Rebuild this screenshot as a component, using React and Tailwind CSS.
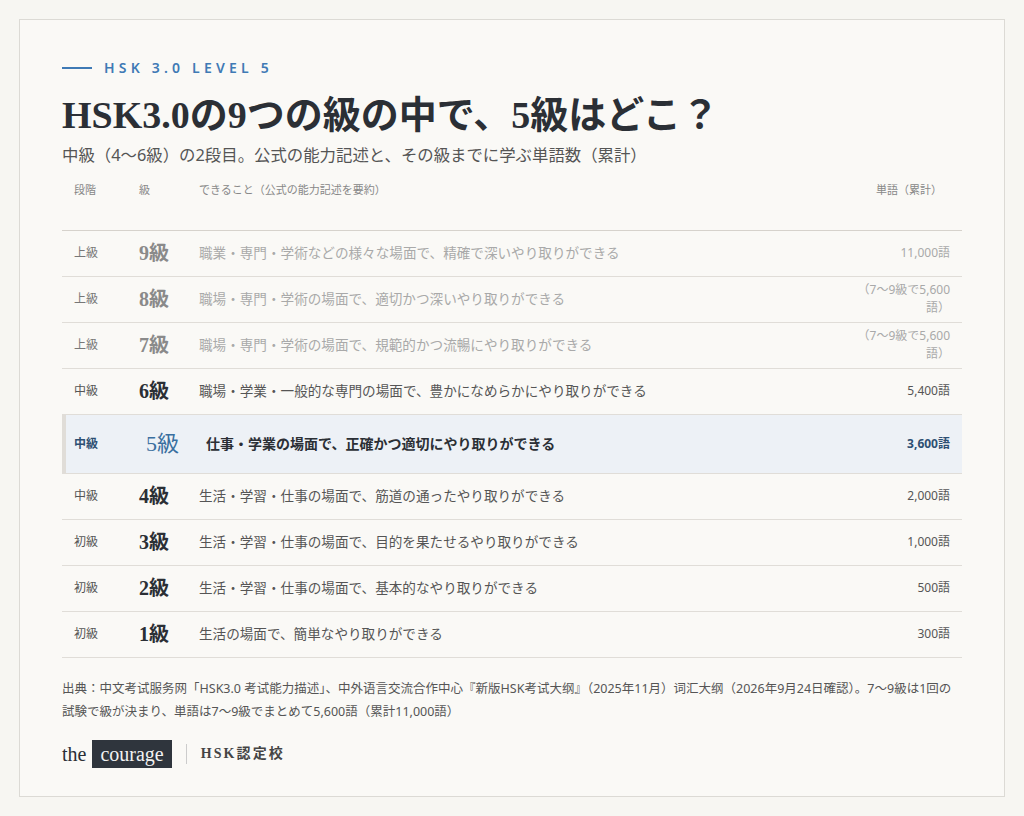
const sans = { fontFamily: '"Noto Sans", "Noto Sans CJK JP", sans-serif' };
const serif = { fontFamily: '"Liberation Serif", "Noto Sans CJK JP", serif' };

const rows = [
  { stage: "上級", lv: "9級", text: "職業・専門・学術などの様々な場面で、精確で深いやり取りができる", words: "11,000語", dim: true },
  { stage: "上級", lv: "8級", text: "職場・専門・学術の場面で、適切かつ深いやり取りができる", words: "（7〜9級で5,600語）", dim: true },
  { stage: "上級", lv: "7級", text: "職場・専門・学術の場面で、規範的かつ流暢にやり取りができる", words: "（7〜9級で5,600語）", dim: true },
  { stage: "中級", lv: "6級", text: "職場・学業・一般的な専門の場面で、豊かになめらかにやり取りができる", words: "5,400語" },
  { stage: "中級", lv: "5級", text: "仕事・学業の場面で、正確かつ適切にやり取りができる", words: "3,600語", active: true },
  { stage: "中級", lv: "4級", text: "生活・学習・仕事の場面で、筋道の通ったやり取りができる", words: "2,000語" },
  { stage: "初級", lv: "3級", text: "生活・学習・仕事の場面で、目的を果たせるやり取りができる", words: "1,000語" },
  { stage: "初級", lv: "2級", text: "生活・学習・仕事の場面で、基本的なやり取りができる", words: "500語" },
  { stage: "初級", lv: "1級", text: "生活の場面で、簡単なやり取りができる", words: "300語" },
];

function Row({ r }) {
  if (r.active) {
    return (
      <div className="flex items-center h-[59px] bg-[#edf1f6] border-l-4 border-[#3f7ab5] border-b border-[#e0ddd8]">
        <div className="w-[80px] pl-2 text-[12px] font-bold text-[#2d4f72]">{r.stage}</div>
        <div className="w-[60px] text-[22px] text-[#3a6f9f]" style={serif}>{r.lv}</div>
        <div className="flex-1 text-[14px] font-bold text-[#2b2f35]">{r.text}</div>
        <div className="pr-3 text-[12px] font-bold text-[#2d4f72]">{r.words}</div>
      </div>
    );
  }
  const c = r.dim ? "text-[#a9a9a9]" : "text-[#555]";
  return (
    <div className="flex items-center h-[46px] border-b border-[#e0ddd8]">
      <div className={`w-[77px] pl-3 text-[12px] ${r.dim ? "text-[#777]" : "text-[#555]"}`}>{r.stage}</div>
      <div className={`w-[60px] text-[20px] font-bold ${r.dim ? "text-[#8a8a8a]" : "text-[#2b2f35]"}`} style={serif}>{r.lv}</div>
      <div className={`flex-1 text-[13.6px] ${c}`}>{r.text}</div>
      <div className={`w-[110px] pr-3 text-right text-[12px] leading-[18px] ${c}`}>{r.words}</div>
    </div>
  );
}

export default function App() {
  return (
    <div className="min-h-[816px] bg-[#f7f6f2] p-[19px]" style={sans}>
      <div className="h-[778px] border border-[#dcdad5] bg-[#faf9f6] px-[42px] pt-[37px]">
        <div className="flex items-center gap-3">
          <div className="w-[30px] h-[2px] bg-[#3f7ab5]" />
          <div className="text-[14px] font-semibold tracking-[0.3em] text-[#3f7ab5]">HSK 3.0 LEVEL 5</div>
        </div>
        <h1 className="mt-[13px] text-[38px] font-bold text-[#2b2f35] leading-[48px]" style={serif}>
          HSK3.0の9つの級の中で、5級はどこ？
        </h1>
        <p className="mt-[4px] text-[16.4px] text-[#555]">中級（4〜6級）の2段目。公式の能力記述と、その級までに学ぶ単語数（累計）</p>
        <div className="mt-[10px] flex items-start h-[53px] border-b border-[#d6d2cc] pt-[4px] text-[11px] text-[#888]">
          <div className="w-[77px] pl-3">段階</div>
          <div className="w-[60px]">級</div>
          <div className="flex-1">できること（公式の能力記述を要約）</div>
          <div className="pr-5">単語（累計）</div>
        </div>
        {rows.map((r) => <Row key={r.lv} r={r} />)}
        <p className="mt-[19px] text-[12.5px] leading-[23px] text-[#555]">
          出典：中文考试服务网「HSK3.0 考试能力描述」、中外语言交流合作中心『新版HSK考试大纲』（2025年11月）词汇大纲（2026年9月24日確認）。7〜9級は1回の試験で級が決まり、単語は7〜9級でまとめて5,600語（累計11,000語）
        </p>
        <div className="mt-[16px] flex items-center">
          <span className="text-[20px] text-[#2b2f35]" style={serif}>the</span>
          <span className="ml-[6px] bg-[#2f353d] px-[8px] text-[20px] leading-[28px] text-[#f2f2f2]" style={serif}>courage</span>
          <span className="mx-[14px] h-[20px] w-px bg-[#ccc]" />
          <span className="text-[14px] font-bold tracking-[0.15em] text-[#444]" style={serif}>HSK認定校</span>
        </div>
      </div>
    </div>
  );
}
